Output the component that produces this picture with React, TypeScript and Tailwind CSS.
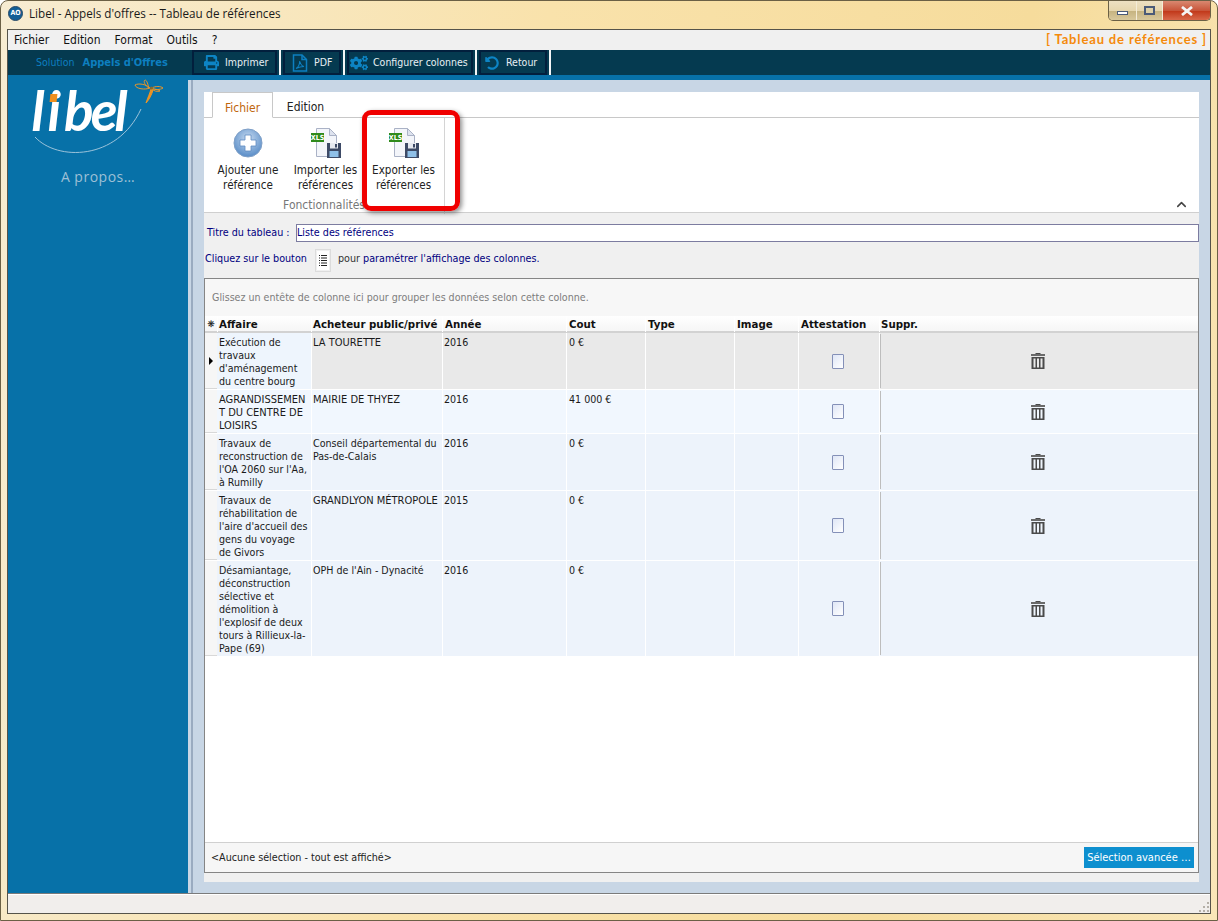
import { FaCogs, FaPrint, FaUndoAlt } from 'react-icons/fa';
import { ChevronUp } from 'lucide-react';

const rows = [
  { affaire: ['Exécution de', 'travaux', "d'aménagement", 'du centre bourg'], acheteur: ['LA TOURETTE'], annee: '2016', cout: '0 €' },
  { affaire: ['AGRANDISSEMEN', 'T DU CENTRE DE', 'LOISIRS'], acheteur: ['MAIRIE DE THYEZ'], annee: '2016', cout: '41 000 €' },
  { affaire: ['Travaux de', 'reconstruction de', "l'OA 2060 sur l'Aa,", 'à Rumilly'], acheteur: ['Conseil départemental du', 'Pas-de-Calais'], annee: '2016', cout: '0 €' },
  { affaire: ['Travaux de', 'réhabilitation de', "l'aire d'accueil des", 'gens du voyage', 'de Givors'], acheteur: ['GRANDLYON MÉTROPOLE'], annee: '2015', cout: '0 €' },
  { affaire: ['Désamiantage,', 'déconstruction', 'sélective et', 'démolition à', "l'explosif de deux", 'tours à Rillieux-la-', 'Pape (69)'], acheteur: ["OPH de l'Ain - Dynacité"], annee: '2016', cout: '0 €' },
];

const headers = [
  { label: 'Affaire', pad: 'pl-[1px]' },
  { label: 'Acheteur public/privé', pad: 'pl-[1px]' },
  { label: 'Année', pad: 'pl-[2px]' },
  { label: 'Cout', pad: 'pl-[2px]' },
  { label: 'Type', pad: 'pl-[2px]' },
  { label: 'Image', pad: 'pl-[2px]' },
  { label: 'Attestation', pad: 'pl-[2px]' },
  { label: 'Suppr.', pad: 'pl-[1px]' },
];

const lineSize = (l: string) => (l === l.toUpperCase() ? 'text-[11px]' : 'text-[10.6px]');

function PdfIcon() {
  return (
    <svg width="16" height="18" viewBox="0 0 16 18" fill="none" stroke="#0d7fc0" strokeWidth="1.5">
      <path d="M1.5 1h8.5l4.5 4.5V17h-13z" />
      <path d="M10 1v4.5h4.5" />
      <path d="M4 14.5c2-1 3.5-4 3.8-7.5.6 3 2 5 4.2 5.5-2.5 0-5.5.8-8 2z" strokeWidth="1.1" />
    </svg>
  );
}

function XlsIcon() {
  return (
    <svg width="30" height="31" viewBox="0 0 30 31">
      <path d="M5.5 1.5h13l7 7v21h-20z" fill="#f3f5fa" stroke="#aab2c6" />
      <path d="M18.5 1.5v7h7z" fill="#dde2ee" stroke="#aab2c6" />
      <rect x="0" y="6" width="13" height="9" fill="#2f8a1c" />
      <text x="6.5" y="13" textAnchor="middle" fontSize="7" fontWeight="700" fill="#ffffff" fontFamily="'DejaVu Sans Condensed', sans-serif">XLS</text>
      <path d="M16 16h14v15H16z" fill="#3d4a66" />
      <rect x="19" y="16" width="8" height="5.5" fill="#e6e9f0" />
      <rect x="24" y="17" width="2" height="3.5" fill="#3d4a66" />
      <rect x="18.5" y="24" width="9" height="6" fill="#8fc0e8" />
    </svg>
  );
}

function PlusIcon() {
  return (
    <svg width="30" height="30" viewBox="0 0 30 30">
      <defs>
        <radialGradient id="plusBg" cx="50%" cy="35%" r="70%">
          <stop offset="0%" stopColor="#c7daf0" />
          <stop offset="100%" stopColor="#4f86c4" />
        </radialGradient>
      </defs>
      <circle cx="15" cy="15" r="14" fill="url(#plusBg)" stroke="#7f9fc6" />
      <path d="M12 7h6v5h5v6h-5v5h-6v-5H7v-6h5z" fill="#ffffff" stroke="#5d8cc2" strokeWidth="0.8" />
    </svg>
  );
}

function TrashIcon() {
  return (
    <svg width="14" height="16" viewBox="0 0 14 16" fill="#4a4a4a">
      <rect x="4.5" y="0" width="5" height="1.5" />
      <rect x="0" y="1" width="14" height="2" fill="#6a6a6a" />
      <path d="M0.5 4h13v12H0.5zM2.5 5.5v9h2v-9zM6 5.5v9h2v-9zM9.5 5.5v9h2v-9z" fillRule="evenodd" />
    </svg>
  );
}

function Dragonfly() {
  return (
    <svg width="30" height="25" viewBox="0 0 30 25" fill="none" stroke="#e8962a" strokeWidth="1">
      <path d="M16 9C12 5 4 4 1 6c1 4 10 5 15 3z" />
      <path d="M15 9C14 6 13 1 11 1c-2 1 0 6 4 8z" />
      <path d="M18 9c3-2 9-2 11 0-3 2-8 2-11 0z" />
      <path d="M18 10c3 0 7 1 8 2-3 1-6 0-8-2z" />
      <path d="M17 10c-1 4-3 8-5 14 3-3 6-9 7-13z" fill="#f0901e" />
      <circle cx="17.5" cy="9" r="1.6" fill="#8a6a2a" stroke="none" />
    </svg>
  );
}

function ToolButton({ icon, label, width, pad }: { icon: React.ReactNode; label: string; width: string; pad: string }) {
  return (
    <div className="flex items-center">
      <div className={`${width} ${pad} h-[25px] flex items-center gap-[5px] border-2 border-[#021f3d] bg-[#053a50] text-[#e8f0f4] text-[10.5px]`}>
        <span className="w-[18px] flex justify-center text-[#0d84c4]">{icon}</span>
        <span className="whitespace-nowrap">{label}</span>
      </div>
      <div className="w-[2px] h-[25px] mx-[2px] bg-[#f4f6f7]" />
    </div>
  );
}

function RibbonButton({ icon, lines, width }: { icon: React.ReactNode; lines: string[]; width: string }) {
  return (
    <div className={`${width} flex flex-col items-center text-[11.6px] leading-[15px] text-[#222]`}>
      <div className="h-[31px] mt-[9px] mb-[5px] flex items-center">{icon}</div>
      {lines.map((l) => (
        <span key={l} className="whitespace-nowrap">{l}</span>
      ))}
    </div>
  );
}

export default function App() {
  return (
    <div className="w-[1218px] h-[921px] flex flex-col overflow-hidden rounded-t-[8px] border border-[#6b6045] bg-[linear-gradient(100deg,#f7ecd2_0%,#f9e2ab_40%,#f6dc9c_75%,#f9e6b8_100%)] font-['DejaVu_Sans_Condensed','Noto_Sans',sans-serif]">
      {/* Title bar */}
      <div className="h-[28px] flex items-start shrink-0">
        <div className="flex items-center pl-[7px] pt-[4px] gap-[6px]">
          <div className="w-[15px] h-[15px] rounded-full bg-[#135f96] border border-[#2a4a66] flex items-center justify-center text-[7px] font-bold text-white leading-none">AO</div>
          <span className="text-[11.7px] text-[#1a1a1a] font-['Open_Sans',sans-serif]">Libel - Appels d'offres -- Tableau de références</span>
        </div>
        <div className="ml-auto mr-[6px] flex h-[20px] border border-t-0 border-[#6b6045] rounded-b-[5px] overflow-hidden">
          <div className="w-[28px] flex items-center justify-center border-r border-[#f4ecd8] bg-[linear-gradient(#ede0c2_0%,#e6d6ae_50%,#c5b27f_51%,#d8c89c_100%)]">
            <div className="w-[11px] h-[4px] bg-white border border-[#4a5a78] mt-[4px]" />
          </div>
          <div className="w-[26px] flex items-center justify-center border-r border-[#f4ecd8] bg-[linear-gradient(#ede0c2_0%,#e6d6ae_50%,#c5b27f_51%,#d8c89c_100%)]">
            <div className="w-[11px] h-[9px] bg-[#ddd0a8] border-2 border-[#4a5a78]" />
          </div>
          <div className="w-[47px] flex items-center justify-center bg-[linear-gradient(#d98870_0%,#c8553a_50%,#c23a1c_55%,#d8684a_100%)]">
            <svg width="12" height="10" viewBox="0 0 12 10">
              <path d="M1 1l10 8M11 1L1 9" stroke="#f4f4f4" strokeWidth="2.8" />
            </svg>
          </div>
        </div>
      </div>

      {/* Window body */}
      <div className="flex-1 mx-[6px] flex flex-col border border-[#55534a] min-h-0">
        {/* Menu */}
        <div className="h-[20px] shrink-0 flex items-center bg-[#f0f0f0] pl-[6px] pr-[3px] text-[12px] text-[#111]">
          <div className="flex gap-[14px]">
            <span>Fichier</span>
            <span>Edition</span>
            <span>Format</span>
            <span>Outils</span>
            <span>?</span>
          </div>
          <span className="ml-auto font-['Lato',sans-serif] font-bold text-[13px] text-[#f58a0b] tracking-[0.85px]">[ Tableau de références ]</span>
        </div>

        {/* Toolbar */}
        <div className="h-[25px] shrink-0 flex items-center bg-[#053a50]">
          <div className="w-[184px] pl-[28px] mt-[1px] flex items-baseline gap-[8px] text-[#0d7fc0] whitespace-nowrap">
            <span className="text-[10.5px]">Solution</span>
            <span className="font-bold text-[11px]">Appels d'Offres</span>
          </div>
          <ToolButton icon={<FaPrint size={15} />} label="Imprimer" width="w-[85px]" pad="pl-[8px]" />
          <ToolButton icon={<PdfIcon />} label="PDF" width="w-[58px]" pad="pl-[6px]" />
          <ToolButton icon={<FaCogs size={18} />} label="Configurer colonnes" width="w-[126px]" pad="pl-[1px]" />
          <ToolButton icon={<FaUndoAlt size={14} />} label="Retour" width="w-[68px]" pad="pl-[2px]" />
        </div>

        <div className="flex-1 flex min-h-0 bg-[#0771a8] border-b border-[#7b7b7b]">
          {/* Sidebar */}
          <div className="w-[180px] shrink-0 relative flex flex-col items-center">
            <div className="relative mt-[5px] mr-[40px] font-['Lato',sans-serif] italic font-bold text-[55px] leading-[60px] text-white whitespace-nowrap">
              <span className="tracking-[3px]">li</span>
              <span className="tracking-[-3px]">bel</span>
              <div className="absolute left-[19px] top-[14px] w-[7px] h-[8px] bg-[#f0901e] -skew-x-6" />
            </div>
            <div className="absolute left-[19px] top-[4px]">
              <svg width="130" height="80" viewBox="0 0 130 80" fill="none">
                <path d="M8 58C30 82 90 82 114 30" stroke="#9cc3da" strokeWidth="1" />
              </svg>
            </div>
            <div className="absolute left-[126px] top-[4px]">
              <Dragonfly />
            </div>
            <div className="mt-[26px] text-[14px] text-[#9dc0d6] tracking-[0.5px] font-['Open_Sans',sans-serif]">A propos…</div>
          </div>

          {/* Content */}
          <div className="flex-1 min-w-0 pt-[5px] flex flex-col">
            <div className="flex-1 flex min-h-0 bg-[#c8d6e5]">
              <div className="w-[5px] bg-[#c8d6e5] border-r-2 border-[#9aabc0]" />
              <div className="flex-1 min-w-0 flex flex-col pt-[12px] px-[11px] pb-[11px]">
                {/* Ribbon */}
                <div className="relative bg-white h-[121px] shrink-0 flex flex-col border-b border-[#cfcfcf]">
                  <div className="h-[26px] flex items-end pl-[8px] border-b border-[#c8c8c8] text-[12px]">
                    <div className="w-[61px] h-[26px] pt-[5px] -mb-px flex items-center justify-center bg-white border border-b-white border-[#c8c8c8] text-[#c0660c]">Fichier</div>
                    <div className="w-[65px] h-[25px] pt-[5px] flex items-center justify-center text-[#222]">Edition</div>
                  </div>
                  <div className="flex-1 flex">
                    <div className="w-[241px] border-r border-[#d4d4d4] flex flex-col">
                      <div className="flex pl-[8px]">
                        <RibbonButton icon={<PlusIcon />} lines={['Ajouter une', 'référence']} width="w-[72px]" />
                        <RibbonButton icon={<XlsIcon />} lines={['Importer les', 'références']} width="w-[83px]" />
                        <RibbonButton icon={<XlsIcon />} lines={['Exporter les', 'références']} width="w-[73px]" />
                      </div>
                      <div className="mt-[3px] text-center text-[12px] text-[#777]">Fonctionnalités</div>
                    </div>
                    <div className="flex-1 flex items-end justify-end pr-[10px] pb-[2px]">
                      <ChevronUp size={15} strokeWidth={2.5} className="text-[#444]" />
                    </div>
                  </div>
                  {/* Red highlight over the export button */}
                  <div className="absolute left-[158px] top-[18px] w-[98px] h-[101px] border-[5px] border-[#f00000] rounded-[9px] shadow-[2px_2px_5px_rgba(0,0,0,0.45)]" />
                </div>

                {/* Title and hint */}
                <div className="h-[65px] shrink-0 bg-[#f0f0f0] flex flex-col pl-[1px] text-[10.7px] text-[#00007f]">
                  <div className="flex items-center mt-[11px] h-[18px] pl-[2px]">
                    <span className="w-[89px] whitespace-nowrap">Titre du tableau :</span>
                    <div className="flex-1 h-[18px] bg-white border border-[#7c7ca0] leading-[15px]">Liste des références</div>
                  </div>
                  <div className="flex items-center mt-[7px]">
                    <span className="w-[110px] mb-[2px] whitespace-nowrap">Cliquez sur le bouton</span>
                    <div className="w-[16px] h-[23px] flex items-center justify-center bg-white border border-[#dcdcdc] shadow-[inset_0_0_0_1px_#f0f0f0]">
                      <svg width="8" height="11" viewBox="0 0 8 11" fill="#222">
                        <path d="M0 0h1v1H0zM2 0h6v1H2zM0 2.5h1v1H0zM2 2.5h6v1H2zM0 5h1v1H0zM2 5h6v1H2zM0 7.5h1v1H0zM2 7.5h6v1H2zM0 10h1v1H0zM2 10h6v1H2z" />
                      </svg>
                    </div>
                    <span className="ml-[7px] mb-[2px] whitespace-nowrap">
                      <span className="text-[#333]">pour </span>paramétrer l'affichage des colonnes.
                    </span>
                  </div>
                </div>

                {/* Grid */}
                <div className="h-[595px] shrink-0 flex flex-col border border-[#858585] bg-white text-[10.6px] leading-[13px] text-[#1a1a1a]">
                  <div className="h-[37px] shrink-0 bg-[#f7f7f7] flex items-center pl-[7px] text-[#7d7d7d]">
                    Glissez un entête de colonne ici pour grouper les données selon cette colonne.
                  </div>
                  <div className="flex-1 min-h-0">
                    <div className="grid grid-cols-[12px_94px_131px_124px_79px_89px_64px_81px_1fr] h-[17px] bg-[linear-gradient(#ffffff,#f6f6f6)] border-b-2 border-[#d2d2d2] font-['DejaVu_Sans',sans-serif] font-bold text-[10.25px] text-[#111]">
                      <div className="flex justify-center items-center text-[9px] leading-none">❋</div>
                      {headers.map((h) => (
                        <div key={h.label} className={`${h.pad} border-l border-white whitespace-nowrap leading-[16px]`}>{h.label}</div>
                      ))}
                    </div>
                    {rows.map((r, i) => {
                      const selected = i === 0;
                      const bg = selected ? 'bg-[#e9e9e9]' : i === 1 ? 'bg-[#f1f7fe]' : 'bg-[#edf3fb]';
                      const firstBg = selected ? 'bg-[#eef5fd]' : bg;
                      return (
                        <div key={i} className="grid grid-cols-[12px_94px_131px_124px_79px_89px_64px_81px_1fr] border-b border-white">
                          <div className="bg-[#f6f6f6] border-b border-[#d8d8d8] flex items-center pl-[4px]">
                            {selected && <div className="w-0 h-0 border-y-[4px] border-y-transparent border-l-[4px] border-l-black" />}
                          </div>
                          <div className={`${firstBg} pl-[2px] pt-[3px] pb-[1px] whitespace-nowrap`}>
                            {r.affaire.map((l) => (
                              <div key={l} className={lineSize(l)}>{l}</div>
                            ))}
                          </div>
                          <div className={`${bg} border-l border-white pl-[1px] pt-[3px] whitespace-nowrap`}>
                            {r.acheteur.map((l) => (
                              <div key={l} className={lineSize(l)}>{l}</div>
                            ))}
                          </div>
                          <div className={`${bg} border-l border-white pl-[1px] pt-[3px]`}>{r.annee}</div>
                          <div className={`${bg} border-l border-white pl-[2px] pt-[3px]`}>{r.cout}</div>
                          <div className={`${bg} border-l border-white`} />
                          <div className={`${bg} border-l border-white`} />
                          <div className={`${bg} border-l border-white flex items-center justify-center pr-[2px]`}>
                            <div className="w-[12px] h-[15px] rounded-[1px] border border-[#8490b8] bg-[linear-gradient(135deg,#dfe6f6,#ffffff)]" />
                          </div>
                          <div className={`${bg} border-l border-white flex items-center justify-center`}>
                            <div className="self-stretch w-[1px] bg-[#bdbdbd] mr-auto my-[1px]" />
                            <div className="mr-[153px]">
                              <TrashIcon />
                            </div>
                          </div>
                        </div>
                      );
                    })}
                  </div>
                  <div className="h-[30px] shrink-0 flex items-center justify-between bg-[#f6f6f6] border-t border-[#d0d0d0] pl-[6px] pr-[4px] text-[#222] text-[10.7px]">
                    <span>&lt;Aucune sélection - tout est affiché&gt;</span>
                    <div className="w-[110px] h-[21px] flex items-center justify-center bg-[#0d8fcf] text-white text-[11px] whitespace-nowrap">Sélection avancée …</div>
                  </div>
                </div>
                <div className="flex-1 bg-[#f0f0f0]" />
              </div>
            </div>
          </div>
        </div>

        {/* Status bar */}
        <div className="h-[19px] shrink-0 bg-[#f1eeec] flex items-end justify-end border-t border-white">
          <svg width="10" height="10" viewBox="0 0 10 10" fill="#b5b0a8" className="mr-[1px] mb-[1px]">
            <path d="M8 0h2v2H8zM4 4h2v2H4zM8 4h2v2H8zM0 8h2v2H0zM4 8h2v2H4zM8 8h2v2H8z" />
          </svg>
        </div>
      </div>
      <div className="h-[6px] shrink-0" />
    </div>
  );
}
